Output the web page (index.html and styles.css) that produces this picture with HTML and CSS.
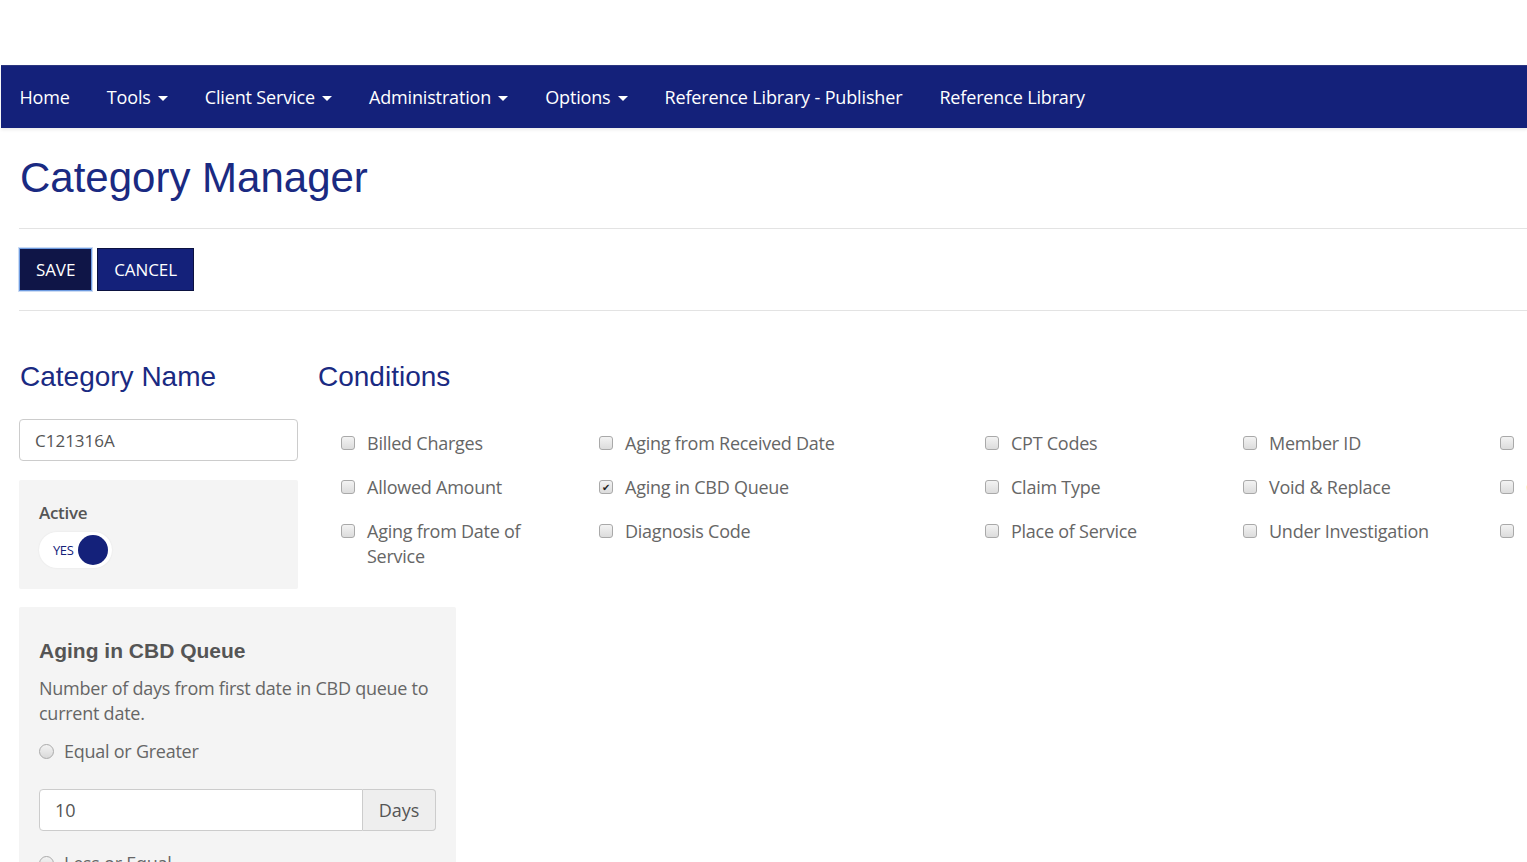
FILE: index.html
```html
<!DOCTYPE html>
<html lang="en">
<head>
<meta charset="utf-8">
<title>Category Manager</title>
<link rel="stylesheet" href="styles.css">
</head>
<body>
<div class="top-space"></div>
<nav class="navbar">
  <a class="nav-item" href="#">Home</a>
  <a class="nav-item" href="#">Tools <span class="caret"></span></a>
  <a class="nav-item" href="#">Client Service <span class="caret"></span></a>
  <a class="nav-item" href="#">Administration <span class="caret"></span></a>
  <a class="nav-item" href="#">Options <span class="caret"></span></a>
  <a class="nav-item" href="#">Reference Library - Publisher</a>
  <a class="nav-item" href="#">Reference Library</a>
</nav>

<main class="page">
  <h1 class="page-title">Category Manager</h1>
  <hr class="rule">
  <div class="actions">
    <button class="btn btn-save">SAVE</button>
    <button class="btn btn-cancel">CANCEL</button>
  </div>
  <hr class="rule">

  <div class="editor">
    <section class="left-col">
      <h2 class="section-title">Category Name</h2>
      <div class="text-input">C121316A</div>
      <div class="panel active-panel">
        <div class="active-label">Active</div>
        <div class="toggle"><span class="toggle-text">YES</span><span class="toggle-knob"></span></div>
      </div>
    </section>
    <section class="conditions">
      <h2 class="section-title">Conditions</h2>
      <div class="cond-grid">
        <label class="cond"><span class="cb"></span><span class="cond-text">Billed Charges</span></label>
        <label class="cond"><span class="cb"></span><span class="cond-text">Aging from Received Date</span></label>
        <label class="cond"><span class="cb"></span><span class="cond-text">CPT Codes</span></label>
        <label class="cond"><span class="cb"></span><span class="cond-text">Member ID</span></label>
        <label class="cond"><span class="cb"></span><span class="cond-text">Provider NPI</span></label>

        <label class="cond"><span class="cb"></span><span class="cond-text">Allowed Amount</span></label>
        <label class="cond"><span class="cb checked">&#10004;</span><span class="cond-text">Aging in CBD Queue</span></label>
        <label class="cond"><span class="cb"></span><span class="cond-text">Claim Type</span></label>
        <label class="cond"><span class="cb"></span><span class="cond-text">Void &amp; Replace</span></label>
        <label class="cond"><span class="cb"></span><span class="cond-text orange">Cost Center</span></label>

        <label class="cond"><span class="cb"></span><span class="cond-text">Aging from Date of Service</span></label>
        <label class="cond"><span class="cb"></span><span class="cond-text">Diagnosis Code</span></label>
        <label class="cond"><span class="cb"></span><span class="cond-text">Place of Service</span></label>
        <label class="cond"><span class="cb"></span><span class="cond-text">Under Investigation</span></label>
        <label class="cond"><span class="cb"></span><span class="cond-text">Bill Type</span></label>
      </div>
    </section>
  </div>

  <div class="panel detail-panel">
    <h3 class="detail-title">Aging in CBD Queue</h3>
    <p class="detail-desc">Number of days from first date in CBD queue to current date.</p>
    <label class="radio-row"><span class="radio"></span>Equal or Greater</label>
    <div class="input-group">
      <div class="ig-input">10</div>
      <div class="ig-addon">Days</div>
    </div>
    <label class="radio-row"><span class="radio"></span>Less or Equal</label>
  </div>
</main>
</body>
</html>
```

FILE: styles.css
```css
html, body {
  margin: 0;
  padding: 0;
  overflow: hidden;
}
body {
  font-family: "Open Sans", "Liberation Sans", sans-serif;
  color: #666;
  background: #fff;
  width: 1527px;
  height: 862px;
}
.top-space {
  height: 65px;
}
.navbar {
  margin-left: 1px;
  height: 63px;
  background: #14217a;
  border-top: 1px solid #2b367f;
  box-sizing: border-box;
  display: flex;
  align-items: center;
  padding-left: 0;
  box-shadow: 0 2px 3px rgba(0,0,0,0.08);
}
.nav-item {
  color: #fff;
  text-decoration: none;
  font-size: 18px;
  padding: 0 18.5px;
  display: flex;
  align-items: center;
  letter-spacing: -0.15px;
}
.caret {
  display: inline-block;
  width: 0;
  height: 0;
  margin-left: 7px;
  border-left: 5px solid transparent;
  border-right: 5px solid transparent;
  border-top: 5px solid #fff;
  margin-top: 2px;
}
.page {
  padding-left: 19px;
}
.page-title {
  margin: 27px 0 0 0;
  font-family: "Liberation Sans", Arial, sans-serif;
  font-weight: 400;
  font-size: 42px;
  line-height: 46px;
  color: #1a2a82;
  padding-left: 1px;
}
.rule {
  border: 0;
  border-top: 1px solid #e3e3e3;
  margin: 27px 0 0 0;
  width: 1600px;
}
.actions {
  display: flex;
  gap: 5px;
  margin: 19px 0 19px 0;
}
.actions + .rule {
  margin-top: 0;
}
.btn {
  font-family: "Open Sans", sans-serif;
  font-size: 17px;
  color: #fff;
  height: 43px;
  padding: 0 16px;
  border-radius: 0;
  cursor: pointer;
  letter-spacing: -0.1px;
}
.btn-save {
  background: #0f1547;
  border: 1px solid #6e9be0;
  box-shadow: 0 0 0 1px rgba(110,155,224,0.35);
}
.btn-cancel {
  background: #14217a;
  border: 1px solid #0b1240;
}
.editor {
  display: flex;
  gap: 19px;
}
.left-col {
  width: 279px;
  flex: none;
}
.section-title {
  margin: 49px 0 0 0;
  font-family: "Liberation Sans", Arial, sans-serif;
  font-weight: 400;
  font-size: 28px;
  line-height: 34px;
  color: #1a2a82;
  padding-left: 1px;
}
.text-input {
  margin-top: 25px;
  height: 42px;
  box-sizing: border-box;
  border: 1px solid #ccc;
  border-radius: 4px;
  padding: 0 15px;
  display: flex;
  align-items: center;
  font-size: 17px;
  color: #555;
}
.panel {
  background: #f4f4f4;
  border-radius: 2px;
}
.active-panel {
  margin-top: 19px;
  height: 109px;
  box-sizing: border-box;
  padding: 21px 20px 20px 20px;
}
.active-label {
  font-size: 17px;
  font-weight: 600;
  line-height: 24px;
  color: #555;
  letter-spacing: -0.3px;
}
.toggle {
  margin-top: 7px;
  width: 73px;
  height: 36px;
  border-radius: 18px;
  background: #fff;
  box-shadow: 0 0 2px rgba(0,0,0,0.08);
  display: flex;
  align-items: center;
  box-sizing: border-box;
  padding-left: 14px;
}
.toggle-text {
  font-size: 13px;
  color: #14217a;
  letter-spacing: -0.4px;
}
.toggle-knob {
  width: 30px;
  height: 30px;
  border-radius: 50%;
  background: #14217a;
  margin-left: 5px;
}
.conditions {
  flex: none;
}
.cond-grid {
  margin-top: 37px;
  padding-left: 24px;
  display: grid;
  grid-template-columns: 258px 386px 258px 257px 258px;
  row-gap: 19px;
}
.cond {
  display: flex;
  align-items: flex-start;
  font-size: 18px;
  line-height: 25px;
  color: #666;
  padding-right: 30px;
  letter-spacing: -0.25px;
}
.cb {
  flex: none;
  width: 14px;
  height: 14px;
  box-sizing: border-box;
  border: 1px solid #a9a9a9;
  border-radius: 3px;
  background: linear-gradient(#f3f3f3, #dcdcdc);
  margin-top: 5px;
  margin-right: 12px;
  display: flex;
  align-items: center;
  justify-content: center;
  font-size: 10px;
  line-height: 1;
  color: #222;
}
.cond-text.orange {
  color: #e8923a;
}
.detail-panel {
  margin-top: 18px;
  width: 437px;
  box-sizing: border-box;
  padding: 31px 20px 20px 20px;
  height: 300px;
}
.detail-title {
  margin: 0;
  font-family: "Liberation Sans", Arial, sans-serif;
  font-weight: 700;
  font-size: 21px;
  line-height: 26px;
  color: #555;
}
.detail-desc {
  margin: 12px 0 0 0;
  font-size: 18px;
  line-height: 25px;
  color: #666;
  letter-spacing: -0.25px;
}
.radio-row {
  display: flex;
  align-items: center;
  margin-top: 13px;
  font-size: 18px;
  line-height: 25px;
  color: #666;
  letter-spacing: -0.25px;
}
.radio {
  width: 15px;
  height: 15px;
  box-sizing: border-box;
  border-radius: 50%;
  border: 1px solid #aaa;
  background: linear-gradient(#f3f3f3, #d9d9d9);
  margin-right: 10px;
}
.input-group {
  margin-top: 25px;
  display: flex;
  height: 42px;
}
.input-group + .radio-row {
  margin-top: 20px;
}
.ig-input {
  flex: 1;
  background: #fff;
  border: 1px solid #ccc;
  border-radius: 4px 0 0 4px;
  padding: 0 15px;
  display: flex;
  align-items: center;
  font-size: 18px;
  color: #555;
}
.ig-addon {
  width: 73px;
  box-sizing: border-box;
  background: #eee;
  border: 1px solid #ccc;
  border-left: 0;
  border-radius: 0 4px 4px 0;
  display: flex;
  align-items: center;
  justify-content: center;
  font-size: 18px;
  color: #555;
}
```
